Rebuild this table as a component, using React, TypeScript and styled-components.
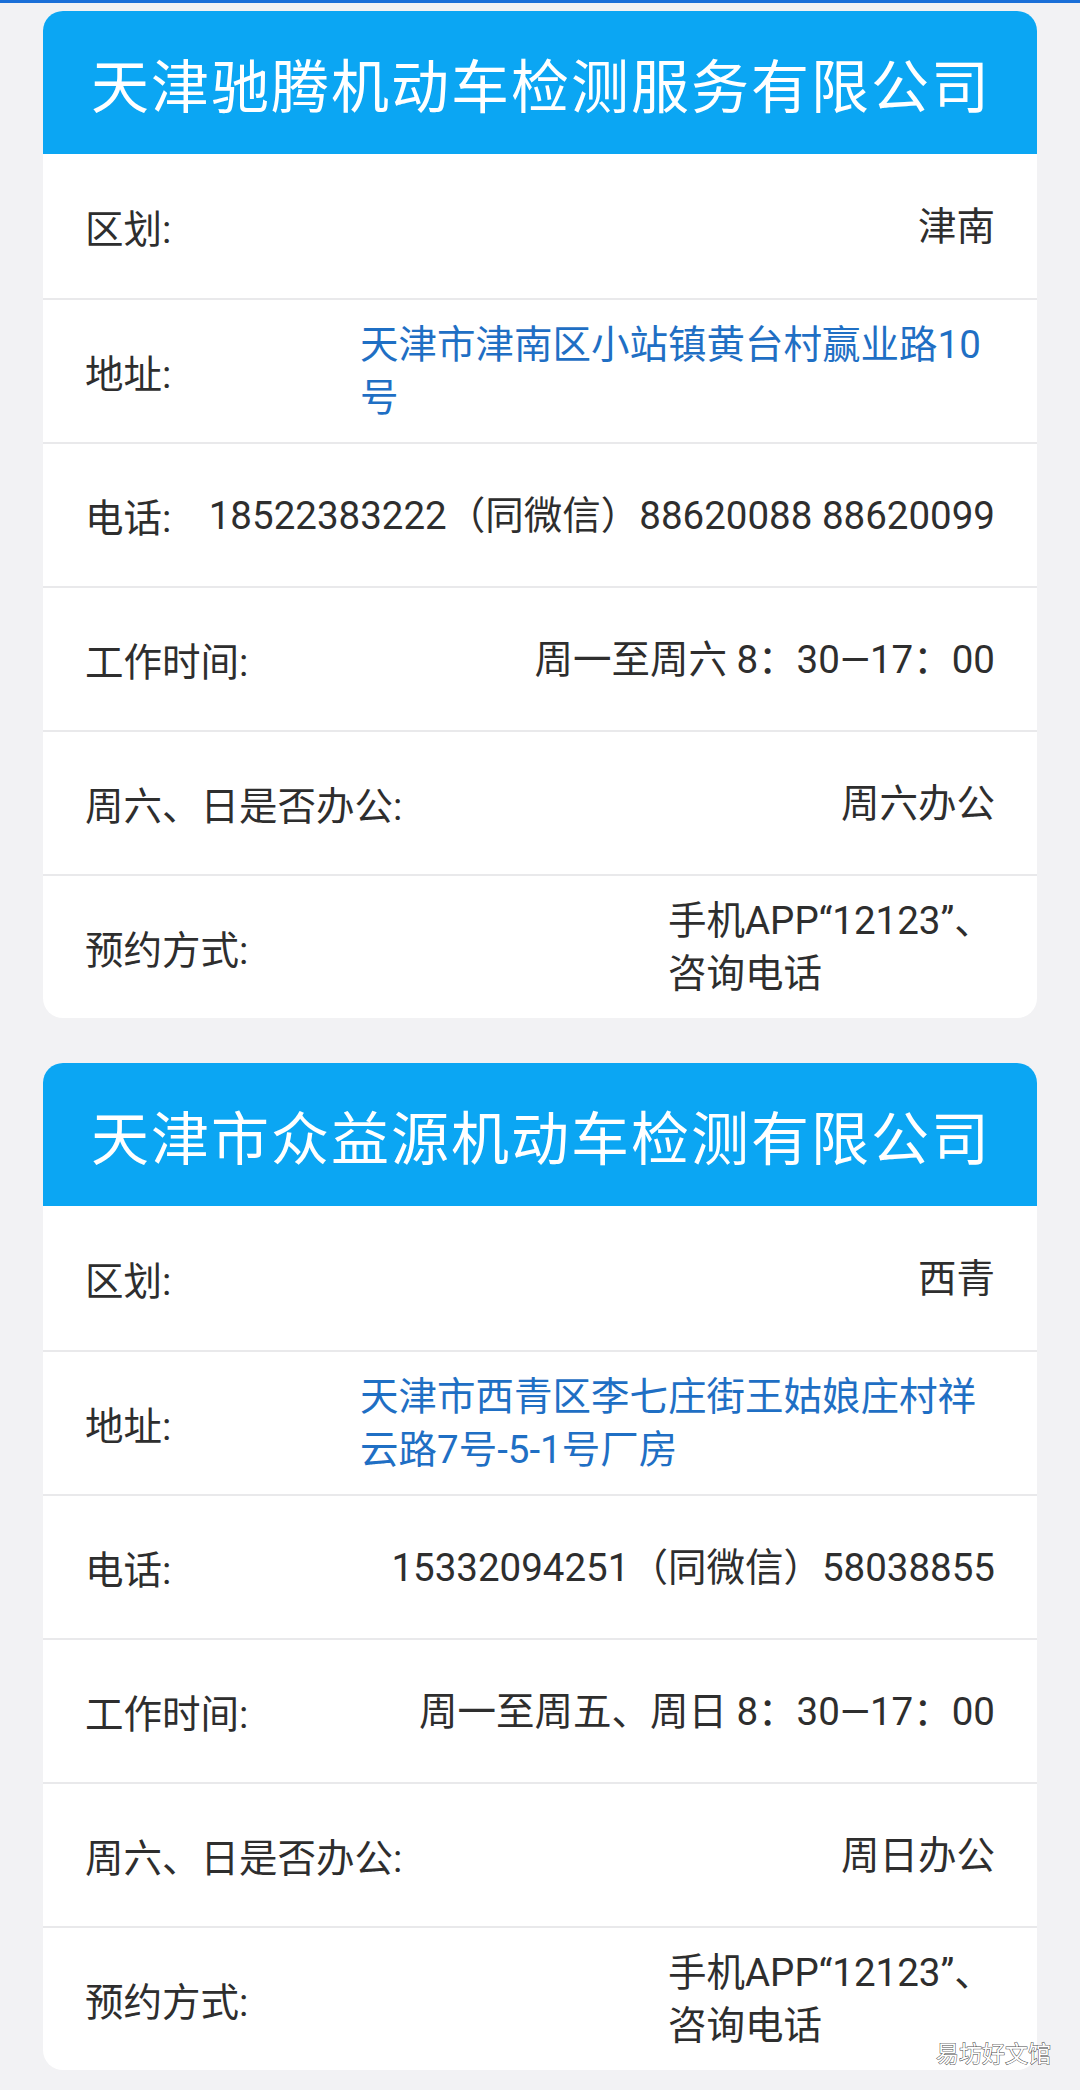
import React from 'react';
import styled, { createGlobalStyle } from 'styled-components';

const GlobalStyle = createGlobalStyle`
    body {
        margin: 0;
        background: #f2f2f4;
        font-family: Roboto, 'Noto Sans CJK SC', sans-serif;
    }
`;

const Page = styled.div`
    position: relative;
    min-height: 2090px;
    box-sizing: border-box;
    padding-bottom: 20px;
`;

const TopStrip = styled.div`
    height: 3px;
    background: #1a6fd8;
`;

const List = styled.div`
    display: flex;
    flex-direction: column;
    gap: 45px;
    padding: 8px 43px 0;
`;

const Card = styled.section`
    background: #ffffff;
    border-radius: 20px;
    overflow: hidden;
`;

const Header = styled.div`
    height: 143px;
    background: #0ba6f3;
    display: flex;
    align-items: center;
    justify-content: center;
`;

const Title = styled.h2`
    margin: 0;
    color: #ffffff;
    font-family: 'Noto Sans CJK SC', sans-serif;
    font-size: 58px;
    font-weight: 400;
    letter-spacing: 2px;
    padding-left: 2px;
    white-space: nowrap;
`;

const Row = styled.div`
    height: 144px;
    box-sizing: border-box;
    padding: 0 42px;
    display: flex;
    align-items: center;
    justify-content: space-between;
    gap: 24px;
    border-top: 2px solid #e9e9eb;
    font-size: 38.5px;
    color: #2e2e2e;

    &:first-of-type {
        border-top: none;
    }
`;

const Label = styled.span`
    flex: none;
    white-space: nowrap;
`;

const Value = styled.span<{ $width?: number; $link?: boolean; $lines?: boolean }>`
    line-height: 53px;
    text-align: ${(p) => (p.$width ? 'left' : 'right')};
    color: ${(p) => (p.$link ? '#1f6fc4' : 'inherit')};
    white-space: ${(p) => (p.$width && !p.$lines ? 'normal' : 'nowrap')};
    ${(p) => (p.$width ? `flex: 0 0 ${p.$width}px;` : '')}
`;

const Mark = styled.div`
    position: absolute;
    right: 29px;
    bottom: 21px;
    font-family: 'Noto Sans CJK SC', sans-serif;
    font-size: 23px;
    color: #ffffff;
    -webkit-text-stroke: 1px #4a4a4a;
    paint-order: stroke fill;
`;

type Item = { label: string; value: React.ReactNode; width?: number; link?: boolean; lines?: boolean };

const booking = (
    <>
        手机APP“12123”、
        <br />
        咨询电话
    </>
);

const companies: { name: string; items: Item[] }[] = [
    {
        name: '天津驰腾机动车检测服务有限公司',
        items: [
            { label: '区划:', value: '津南' },
            { label: '地址:', value: '天津市津南区小站镇黄台村赢业路10号', width: 635, link: true },
            { label: '电话:', value: '18522383222（同微信）88620088 88620099' },
            { label: '工作时间:', value: '周一至周六 8：30—17：00' },
            { label: '周六、日是否办公:', value: '周六办公' },
            { label: '预约方式:', value: booking, width: 327, lines: true },
        ],
    },
    {
        name: '天津市众益源机动车检测有限公司',
        items: [
            { label: '区划:', value: '西青' },
            { label: '地址:', value: '天津市西青区李七庄街王姑娘庄村祥云路7号-5-1号厂房', width: 635, link: true },
            { label: '电话:', value: '15332094251（同微信）58038855' },
            { label: '工作时间:', value: '周一至周五、周日 8：30—17：00' },
            { label: '周六、日是否办公:', value: '周日办公' },
            { label: '预约方式:', value: booking, width: 327, lines: true },
        ],
    },
];

export default function App() {
    return (
        <>
            <GlobalStyle />
            <Page>
                <TopStrip />
                <List>
                    {companies.map((c) => (
                        <Card key={c.name}>
                            <Header>
                                <Title>{c.name}</Title>
                            </Header>
                            <div>
                                {c.items.map((it) => (
                                    <Row key={it.label}>
                                        <Label>{it.label}</Label>
                                        <Value $width={it.width} $link={it.link} $lines={it.lines}>
                                            {it.value}
                                        </Value>
                                    </Row>
                                ))}
                            </div>
                        </Card>
                    ))}
                </List>
                <Mark>易坊好文馆</Mark>
            </Page>
        </>
    );
}
